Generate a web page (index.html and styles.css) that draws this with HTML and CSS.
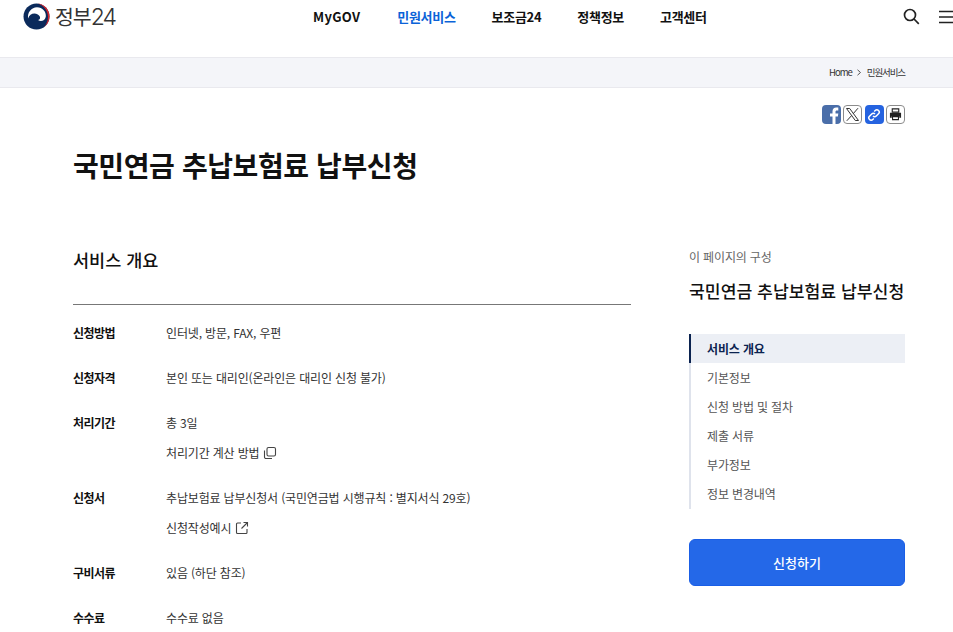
FILE: index.html
```html
<!DOCTYPE html>
<html lang="ko">
<head>
<meta charset="utf-8">
<title>국민연금 추납보험료 납부신청</title>
<link rel="stylesheet" href="styles.css">
</head>
<body>
<header class="header">
  <a class="logo">
    <svg class="logo-mark" width="27" height="27" viewBox="0 0 27 27">
      <circle cx="13.5" cy="13.5" r="13" fill="#0b2a5b"/>
      <path d="M15 .6c6.700.8 11.500 6.300 11.500 12.900 0 4.300-2 8-5.300 10.400 2.400-2.700 3.800-6 3.800-9.800C25 8 20.800 2.500 15 .6z" fill="#d8232a"/>
      <path d="M5.200 15.500C4 9.500 8.500 4.200 14 4.200c5.500 0 9.500 4.500 8.800 9.500-.6 3.800-5 5.700-7.800 3.300 3-.6 2.700-3.800-.2-5.500-3.500-2-8.400-.8-9.600 4z" fill="#fff"/>
    </svg>
    <span class="logo-text">정부<span class="logo-num">24</span></span>
  </a>
  <nav class="gnb">
    <a class="en">MyGOV</a>
    <a class="on">민원서비스</a>
    <a>보조금24</a>
    <a>정책정보</a>
    <a>고객센터</a>
  </nav>
  <div class="util">
    <svg width="18" height="18" viewBox="0 0 18 18" fill="none" stroke="#222" stroke-width="1.700"><circle cx="7" cy="7" r="5.500"/><path d="M11 11l4.800 4.800"/></svg>
    <svg class="menu" width="16" height="14" viewBox="0 0 16 14" stroke="#222" stroke-width="1.600"><path d="M0 1.500h16M0 7h16M0 12.500h16"/></svg>
  </div>
</header>

<div class="crumbs">
  <span class="home">Home</span>
  <svg width="6" height="7" viewBox="0 0 6 7" fill="none" stroke="#555"><path d="M1.500.8l3 2.700-3 2.700"/></svg>
  <span class="here">민원서비스</span>
</div>

<div class="share">
  <span class="sbtn fb"><svg width="19" height="19" viewBox="0 0 19 19"><path d="M10.500 19v-7.500H8V8.500h2.500V6.300c0-2.500 1.500-3.800 3.700-3.800h2.100v2.900h-1.400c-1.100 0-1.400.6-1.400 1.300v1.800h2.800l-.4 3h-2.400V19z" fill="#fff"/></svg></span>
  <span class="sbtn line"><svg width="15" height="15" viewBox="0 0 15 15" fill="none" stroke="#333" stroke-width="1"><path d="M1.500 1.500h3.200l8.800 12h-3.200zM13 1.200L8.300 6.600M6.500 8.700L1.800 13.800"/></svg></span>
  <span class="sbtn link"><svg width="14" height="14" viewBox="0 0 14 14" fill="none" stroke="#fff" stroke-width="1.500"><path d="M6 8a2.300 2.300 0 0 0 3.300 0l2.200-2.200a2.300 2.300 0 0 0-3.300-3.300L7.200 3.500M8 6a2.300 2.300 0 0 0-3.300 0L2.500 8.200a2.300 2.300 0 0 0 3.300 3.300l1-1"/></svg></span>
  <span class="sbtn line"><svg width="13" height="13" viewBox="0 0 14 14"><path d="M3.500 1h7v3.500h-7z" fill="none" stroke="#222" stroke-width="1.200"/><path d="M1 5h12v5.500h-2V8.500H3v2H1z" fill="#222"/><path d="M3.800 9.300h6.400v3.200H3.800z" fill="#fff" stroke="#222" stroke-width="1.200"/></svg></span>
</div>

<main class="page">
  <h1 class="title">국민연금 추납보험료 납부신청</h1>
  <div class="cols">
    <section class="content">
      <h2 class="sec-title">서비스 개요</h2>
      <dl class="info">
        <div class="row"><dt>신청방법</dt><dd><p>인터넷, 방문, FAX, 우편</p></dd></div>
        <div class="row"><dt>신청자격</dt><dd><p>본인 또는 대리인(온라인은 대리인 신청 불가)</p></dd></div>
        <div class="row"><dt>처리기간</dt><dd><p>총 3일</p><p>처리기간 계산 방법 <svg class="ico" width="14" height="14" viewBox="0 0 14 14" fill="none" stroke="#444" stroke-width="1.100"><rect x="4" y="1.500" width="8.500" height="8.500" rx="1.500"/><path d="M1.500 4.500V11a1.500 1.500 0 0 0 1.500 1.500h6"/></svg></p></dd></div>
        <div class="row"><dt>신청서</dt><dd><p>추납보험료 납부신청서 (국민연금법 시행규칙 : 별지서식 29호)</p><p>신청작성예시 <svg class="ico" width="14" height="14" viewBox="0 0 14 14" fill="none" stroke="#444" stroke-width="1.100"><path d="M6 2H2.500A1 1 0 0 0 1.500 3v8.500a1 1 0 0 0 1 1H11a1 1 0 0 0 1-1V8M8.500 1.500h4v4M12.500 1.500L6.500 7.500"/></svg></p></dd></div>
        <div class="row"><dt>구비서류</dt><dd><p>있음 (하단 참조)</p></dd></div>
        <div class="row"><dt>수수료</dt><dd><p>수수료 없음</p></dd></div>
      </dl>
    </section>
    <aside class="side">
      <p class="side-cap">이 페이지의 구성</p>
      <p class="side-title">국민연금 추납보험료 납부신청</p>
      <ul class="toc">
        <li class="on">서비스 개요</li>
        <li>기본정보</li>
        <li>신청 방법 및 절차</li>
        <li>제출 서류</li>
        <li>부가정보</li>
        <li>정보 변경내역</li>
      </ul>
      <a class="apply">신청하기</a>
    </aside>
  </div>
</main>
</body>
</html>
```
FILE: styles.css
```css
* { box-sizing: border-box; margin: 0; padding: 0; }
html, body { height: 632px; overflow: hidden; }
body { background: #fff; color: #1d1d1d; font-family: "Noto Sans CJK KR", "Noto Sans", sans-serif; font-size: 12px; }
svg { display: block; flex: none; }

.header { height: 57px; display: flex; align-items: flex-start; }
.logo { display: flex; align-items: center; gap: 5px; margin: 3px 0 0 23px; height: 27px; flex: none; width: 92px; }
.logo-text { font-size: 20.500px; color: #333; letter-spacing: -1px; line-height: 27px; white-space: nowrap; }
.logo-num { font-family: "Inter", sans-serif; font-weight: 300; font-size: 23px; letter-spacing: -2px; }
.gnb { display: flex; gap: 36px; margin: 8px 0 0 198px; font-size: 13px; font-weight: 700; line-height: 18px; color: #111; letter-spacing: -.3px; }
.gnb .en { letter-spacing: .3px; margin-right: 1px; }
.gnb .on { color: #0b63d8; }
.util { display: flex; gap: 18px; align-items: center; margin-left: auto; padding-top: 8px; margin-right: -2px; }

.crumbs { height: 31px; background: #f4f5f9; border-top: 1px solid #e9e9ee; border-bottom: 1px solid #e9e9ee; display: flex; justify-content: flex-end; align-items: center; gap: 4px; padding: 0 48px 1px 0; font-size: 9.500px; color: #333; }
.home { letter-spacing: -1px; }
.here { letter-spacing: -1.100px; margin-left: 1px; }

.share { display: flex; justify-content: flex-end; gap: 2.330px; padding: 17px 48px 0 0; }
.sbtn { width: 19px; height: 19px; border-radius: 4px; display: flex; align-items: center; justify-content: center; overflow: hidden; }
.fb { background: #4a6ea9; }
.line { background: #fff; border: 1px solid #8c8c8c; }
.link { background: #2563e0; }

.page { padding: 0 48px 0 73px; }
.title { font-size: 28px; font-weight: 700; line-height: 40px; color: #111; letter-spacing: -.4px; margin-top: 21px; }
.cols { display: flex; justify-content: space-between; margin-top: 66px; }
.content { width: 558px; }
.sec-title { font-size: 17.500px; font-weight: 500; line-height: 26px; color: #111; padding-bottom: 31px; border-bottom: 1px solid #777; margin-top: -4px; }
.info { padding-top: 13px; }
.row { display: flex; padding-bottom: 15px; }
dt { width: 93px; font-weight: 700; font-size: 12px; line-height: 30px; color: #111; letter-spacing: -.5px; }
dd p { line-height: 30px; font-size: 12px; color: #333; display: flex; align-items: center; gap: 4px; letter-spacing: -.16px; }
.ico { flex: none; }

.side { width: 216px; }
.side-cap { font-size: 12px; line-height: 18px; color: #666; margin-top: -3px; letter-spacing: -.15px; }
.side-title { font-size: 17.200px; font-weight: 500; line-height: 24px; color: #111; margin-top: 13px; }
.toc { list-style: none; margin-top: 31px; border-left: 2px solid #dfe3ec; }
.toc li { height: 29.100px; line-height: 29px; padding-left: 16px; font-size: 12px; color: #555; letter-spacing: -.15px; }
.toc .on { background: #eceff5; font-weight: 700; color: #0b2350; box-shadow: -2px 0 0 #0b2350; }
.apply { display: flex; align-items: center; justify-content: center; height: 47px; margin-top: 30px; background: #2468e8; border: 1px solid #1a5ee6; border-radius: 6px; color: #fff; font-size: 13px; font-weight: 500; }
```
